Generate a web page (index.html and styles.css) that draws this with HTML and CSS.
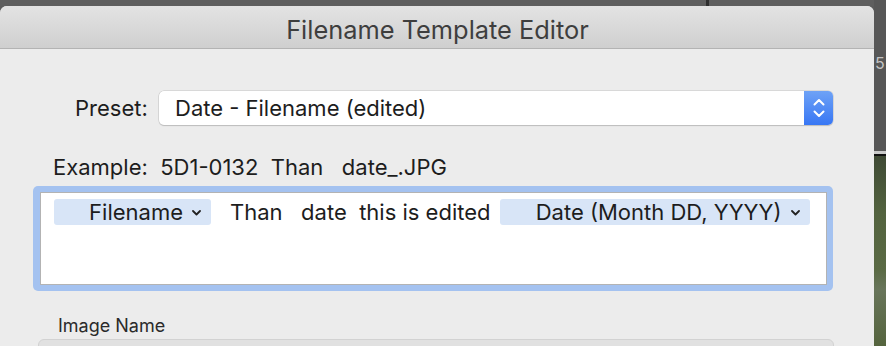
FILE: index.html
```html
<!DOCTYPE html>
<html>
<head>
<meta charset="utf-8">
<link rel="stylesheet" href="styles.css">
</head>
<body>
<div class="page">
  <div class="main">
    <div class="topgap"></div>
    <div class="dialog">
      <div class="titlebar">Filename Template Editor</div>
      <div class="content">
        <div class="preset-row">
          <span class="label">Preset:</span>
          <div class="popup">
            <span class="popup-text">Date - Filename (edited)</span>
            <span class="stepper">
              <svg width="14" height="24" viewBox="0 0 14 24"><path d="M2.5 8.5 L7 4 L11.5 8.5" fill="none" stroke="#fff" stroke-width="2" stroke-linecap="round" stroke-linejoin="round"/><path d="M2.5 15.5 L7 20 L11.5 15.5" fill="none" stroke="#fff" stroke-width="2" stroke-linecap="round" stroke-linejoin="round"/></svg>
            </span>
          </div>
        </div>
        <div class="example">Example:&nbsp; 5D1-0132&nbsp; Than &nbsp; date_.JPG</div>
        <div class="ring">
          <div class="field">
            <span class="token token-a">Filename <svg class="chev" width="9" height="6" viewBox="0 0 9 6"><path d="M1 1 L4.5 4.5 L8 1" fill="none" stroke="#222" stroke-width="1.8" stroke-linecap="round" stroke-linejoin="round"/></svg></span>
            <span class="plain">Than &nbsp; date&nbsp; this is edited</span>
            <span class="token token-b">Date (Month DD, YYYY) <svg class="chev" width="9" height="6" viewBox="0 0 9 6"><path d="M1 1 L4.5 4.5 L8 1" fill="none" stroke="#222" stroke-width="1.8" stroke-linecap="round" stroke-linejoin="round"/></svg></span>
          </div>
        </div>
        <div class="section-label">Image Name</div>
        <div class="groupbox"></div>
      </div>
    </div>
  </div>
  <div class="strip">
    <div class="strip-top"><span class="strip-num">5</span></div>
    <div class="strip-line1"></div>
    <div class="strip-line2"></div>
    <div class="strip-photo"></div>
  </div>
</div>
</body>
</html>
```

FILE: styles.css
```css
* { box-sizing: border-box; }
html, body {
  margin: 0;
  padding: 0;
  width: 886px;
  height: 346px;
  overflow: hidden;
  background: #5c5c5c;
  font-family: Inter, "Noto Sans", "Liberation Sans", sans-serif;
}
.page {
  display: flex;
  width: 886px;
  height: 346px;
}
.main {
  width: 874px;
  display: flex;
  flex-direction: column;
}
.topgap {
  height: 6px;
  background: linear-gradient(90deg, #5e5e5e 0, #5e5e5e 706px, #2e2e2e 706px, #2e2e2e 709px, #5e5e5e 709px);
}
.dialog {
  flex: 1;
  background: #ececec;
  border-radius: 7px 7px 0 0;
  overflow: hidden;
}
.titlebar {
  height: 43px;
  background: linear-gradient(#e3e3e3, #cfcfcf);
  border-bottom: 1px solid #b3b3b3;
  display: flex;
  align-items: center;
  justify-content: center;
  padding-left: 1px;
  padding-top: 4px;
  font-size: 25.4px;
  color: #3e3e3e;
}
.content {
  padding: 42px 41px 0 33px;
}
.preset-row {
  display: flex;
  align-items: center;
  padding-left: 42px;
}
.label {
  font-size: 22px;
  color: #1d1d1d;
  width: 84px;
}
.popup {
  flex: 1;
  height: 34px;
  background: #fff;
  border-radius: 5px;
  box-shadow: 0 0 0 0.5px #c4c4c4, 0 1px 1px rgba(0,0,0,0.22);
  display: flex;
  align-items: center;
  overflow: hidden;
}
.popup-text {
  flex: 1;
  padding-left: 16px;
  font-size: 22px;
  color: #1d1d1d;
}
.stepper {
  width: 29px;
  height: 100%;
  background: linear-gradient(#6ea2f6, #3877f4);
  display: flex;
  align-items: center;
  justify-content: center;
}
.example {
  margin-top: 30px;
  padding-left: 20px;
  font-size: 22px;
  color: #1d1d1d;
  line-height: 24px;
}
.ring {
  margin-top: 7px;
  height: 105px;
  border-radius: 5px;
  background: #a4c2f0;
  padding: 6px 6px 6px 7px;
}
.field {
  height: 100%;
  background: #fff;
  border: 1px solid #b3b3b3;
  display: flex;
  align-items: flex-start;
  padding: 6px 0 0 13px;
  font-size: 22px;
  color: #1d1d1d;
}
.token {
  background: #d8e5f7;
  border-radius: 3px;
  height: 26px;
  display: flex;
  align-items: center;
  justify-content: flex-end;
  padding-right: 10px;
}
.token .chev { margin-left: 9px; margin-top: 2px; }
.token-a { width: 157px; }
.token-b { width: 310px; }
.plain {
  height: 26px;
  line-height: 26px;
  padding-left: 19px;
  padding-right: 9px;
}
.section-label {
  margin-top: 25px;
  padding-left: 25px;
  font-size: 18px;
  color: #2a2a2a;
  line-height: 20px;
}
.groupbox {
  margin-top: 3px;
  margin-left: 5px;
  margin-right: -1px;
  height: 40px;
  background: #e1e1e1;
  border: 1px solid #d2d2d2;
  border-radius: 6px;
}
.strip {
  width: 12px;
  display: flex;
  flex-direction: column;
}
.strip-top {
  height: 151px;
  background: #575757;
  overflow: hidden;
  position: relative;
}
.strip-num {
  position: absolute;
  left: 1px;
  top: 53px;
  font-size: 16px;
  color: #c4c4c4;
}
.strip-line1 { height: 3px; background: #c9c9c9; }
.strip-line2 { height: 2px; background: #111; }
.strip-photo {
  flex: 1;
  background: linear-gradient(#3f4a35 0, #53633f 30%, #5a6a44 60%, #68755a 70%, #55643e 100%);
}
```
